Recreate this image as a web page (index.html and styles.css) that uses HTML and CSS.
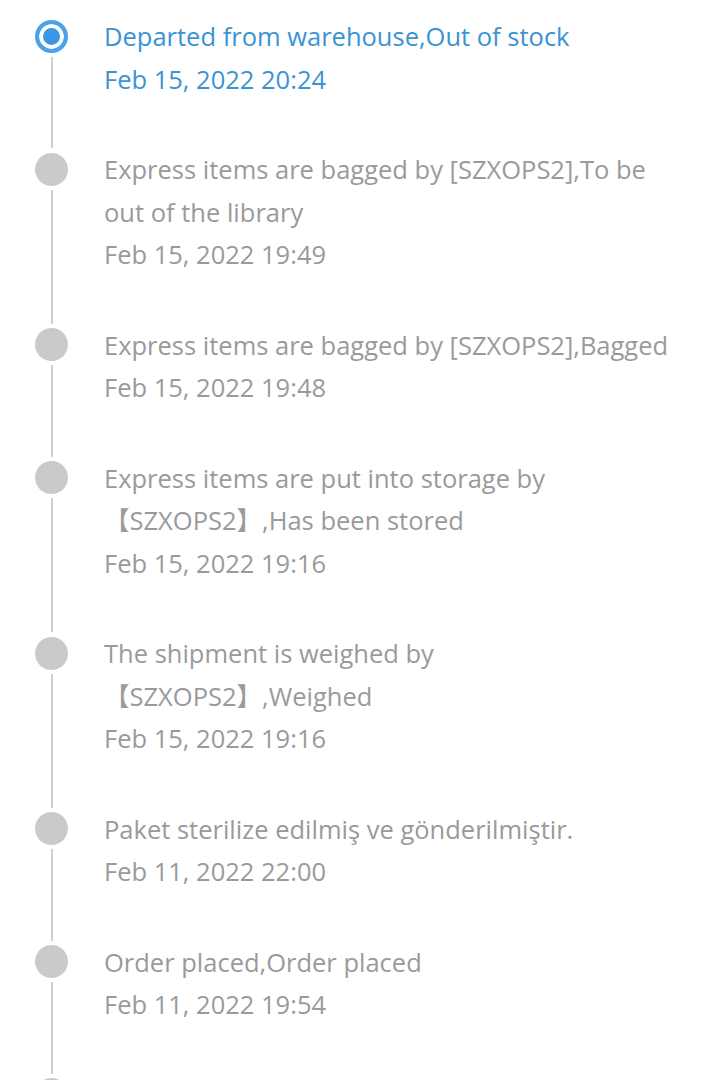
FILE: index.html
```html
<!DOCTYPE html>
<html>
<head>
<meta charset="utf-8">
<link rel="stylesheet" href="styles.css">
</head>
<body>
<ul class="timeline">
  <li class="event event-current">
    <div class="marker"><span class="dot"></span><span class="seg"></span></div>
    <div class="info">
      <div class="desc">Departed from warehouse,Out of stock</div>
      <div class="time">Feb 15, 2022 20:24</div>
    </div>
  </li>
  <li class="event">
    <div class="marker"><span class="dot"></span><span class="seg"></span></div>
    <div class="info">
      <div class="desc">Express items are bagged by [SZXOPS2],To be out of the library</div>
      <div class="time">Feb 15, 2022 19:49</div>
    </div>
  </li>
  <li class="event">
    <div class="marker"><span class="dot"></span><span class="seg"></span></div>
    <div class="info">
      <div class="desc">Express items are bagged by [SZXOPS2],Bagged</div>
      <div class="time">Feb 15, 2022 19:48</div>
    </div>
  </li>
  <li class="event">
    <div class="marker"><span class="dot"></span><span class="seg"></span></div>
    <div class="info">
      <div class="desc">Express items are put into storage by 【SZXOPS2】,Has been stored</div>
      <div class="time">Feb 15, 2022 19:16</div>
    </div>
  </li>
  <li class="event">
    <div class="marker"><span class="dot"></span><span class="seg"></span></div>
    <div class="info">
      <div class="desc">The shipment is weighed by 【SZXOPS2】,Weighed</div>
      <div class="time">Feb 15, 2022 19:16</div>
    </div>
  </li>
  <li class="event">
    <div class="marker"><span class="dot"></span><span class="seg"></span></div>
    <div class="info">
      <div class="desc">Paket sterilize edilmiş ve gönderilmiştir.</div>
      <div class="time">Feb 11, 2022 22:00</div>
    </div>
  </li>
  <li class="event">
    <div class="marker"><span class="dot"></span><span class="seg"></span></div>
    <div class="info">
      <div class="desc">Order placed,Order placed</div>
      <div class="time">Feb 11, 2022 19:54</div>
    </div>
  </li>
  <li class="event">
    <div class="marker"><span class="dot"></span><span class="seg"></span></div>
    <div class="info"></div>
  </li>
</ul>
</body>
</html>
```

FILE: styles.css
```css
html, body {
  margin: 0;
  padding: 0;
  background: #ffffff;
}
body {
  font-family: "Open Sans", "Noto Sans CJK SC", sans-serif;
  font-size: 25.5px;
  line-height: 42.5px;
  color: #9a9a9a;
  overflow: hidden;
}
.timeline {
  list-style: none;
  margin: 0;
  padding: 15px 40px 0 35px;
}
.event {
  display: flex;
  gap: 36px;
}
.marker {
  flex: 0 0 33px;
  display: flex;
  flex-direction: column;
  align-items: center;
}
.dot {
  margin-top: 4.75px;
  width: 33px;
  height: 33px;
  border-radius: 50%;
  background: #cacaca;
  box-sizing: border-box;
  flex: none;
}
.event-current .dot {
  background: #3d95e6;
  border: 4px solid #4aa2ea;
  box-shadow: inset 0 0 0 4px #ffffff;
}
.seg {
  flex: 1;
  width: 2px;
  margin-top: 4px;
  background: #cfcfcf;
}
.info {
  flex: 1;
  padding-bottom: 48px;
  min-height: 85px;
}
.event-current .info {
  color: #3a93d3;
}
```
